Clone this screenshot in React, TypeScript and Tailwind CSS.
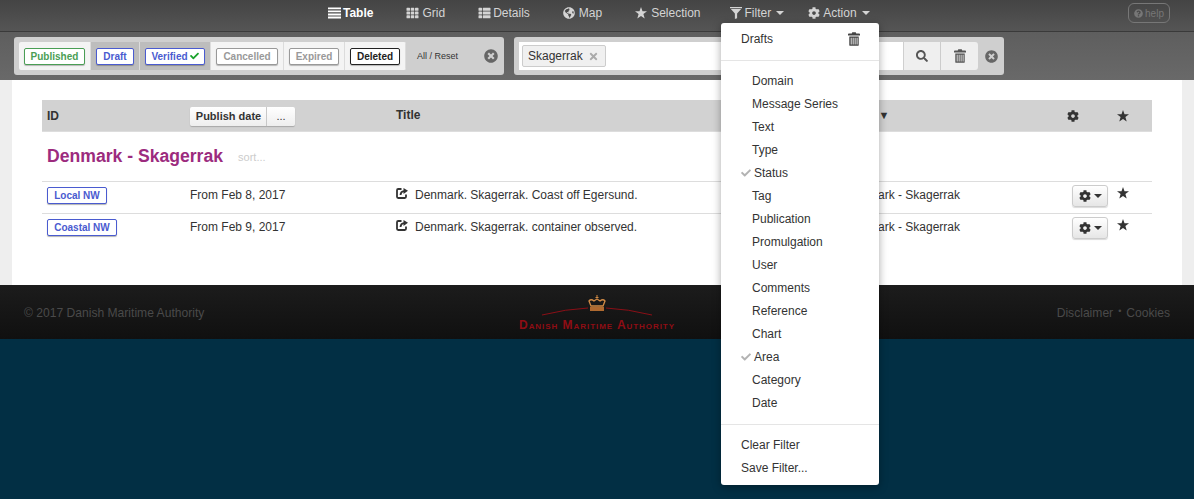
import React from "react";
import { FaCog, FaSearch, FaTh, FaThList, FaCheck, FaTimes, FaTimesCircle, FaQuestionCircle, FaGlobeAmericas } from "react-icons/fa";

const font = { fontFamily: '"Liberation Sans", Arial, sans-serif' };

function Trash({ className = "" }: { className?: string }) {
  return (
    <svg viewBox="0 0 14 16" className={className} fill="currentColor">
      <path d="M5 0h4l.6 1.5H13a1 1 0 0 1 1 1V4H0V2.500a1 1 0 0 1 1-1h3.400z" />
      <path d="M1.500 5h11v10a1 1 0 0 1-1 1h-9a1 1 0 0 1-1-1zM3.200 6.500v8h1v-8zm2.300 0v8h1v-8zm2.300 0v8h1v-8zm2.300 0v8h1v-8z" fillRule="evenodd" />
    </svg>
  );
}

function FilterIcon({ className = "" }: { className?: string }) {
  return (
    <svg viewBox="0 0 14 14" className={className} fill="currentColor">
      <path d="M0 0h14v1.400H0zM1 2.400h12L8.300 7.500V13l-2.600 1V7.500z" />
    </svg>
  );
}

function Bars({ className = "" }: { className?: string }) {
  return (
    <svg viewBox="0 0 14 12" className={className} fill="currentColor">
      <path d="M0 0h14v2H0zM0 3.300h14v2H0zM0 6.600h14v2H0zM0 9.900h14v2H0z" />
    </svg>
  );
}

function Star({ className = "" }: { className?: string }) {
  return (
    <svg viewBox="0 0 12 12" className={className} fill="currentColor">
      <path d="M6 0l1.500 4.300H12L8.400 7l1.300 4.600L6 8.900l-3.700 2.700L3.600 7 0 4.300h4.500z" />
    </svg>
  );
}

function ShareIcon({ className = "" }: { className?: string }) {
  return (
    <svg viewBox="0 0 12 12" className={className} fill="none" stroke="currentColor">
      <path d="M5.500 2H2.200Q1 2 1 3.200v6.600Q1 11 2.200 11h6.600Q10 11 10 9.800V7.500" strokeWidth="1.800" />
      <path d="M4.500 8Q4.800 4.500 8 4.200" strokeWidth="1.800" />
      <path d="M7.500 1L12 3.800 7.500 7z" fill="currentColor" stroke="none" />
    </svg>
  );
}

function Caret() {
  return <span className="ml-[2px] inline-block h-0 w-0 border-x-[4px] border-t-[4px] border-x-transparent border-t-current" />;
}

function NavItem({ icon, label, active, caret, className = "" }: { icon: React.ReactNode; label: string; active?: boolean; caret?: boolean; className?: string }) {
  return (
    <div className={`flex items-center ${active ? "font-bold text-white" : "text-[#d4d4d4]"} ${className}`}>
      {icon}
      <span>{label}</span>
      {caret && <span className="ml-[3px] flex"><Caret /></span>}
    </div>
  );
}

function Status({ label, cls, width, active, check }: { label: string; cls: string; width: string; active?: boolean; check?: boolean }) {
  return (
    <div className={`flex h-[28px] items-center justify-center border-r border-[#dcdcdc] px-[5px] ${active ? "bg-[#bdbdbd]" : ""} ${width}`}>
      <span className={`flex h-[17px] w-full items-center justify-center gap-[2px] rounded-[2px] border bg-white text-[10px] font-bold shadow-[0_1px_1px_rgba(0,0,0,0.25)] ${cls}`}>
        {label}
        {check && <FaCheck className="h-[10px] w-[9px] text-[#1aa32c]" />}
      </span>
    </div>
  );
}

const gridCols = "grid-cols-[148px_206px_450px_218px_1fr]";

function Row({ badge, badgeW, date, title, area }: { badge: string; badgeW: string; date: string; title: string; area: string }) {
  return (
    <div className={`grid h-[32px] ${gridCols} border-t border-[#dddddd] text-[12px] text-[#333]`}>
      <div className="pl-[5px] pt-[5px]">
        <span className={`flex h-[17px] items-center justify-center rounded-[2px] border border-[#4a5bd0] bg-white text-[10px] font-bold text-[#4a5bd0] shadow-[0_1px_1px_rgba(0,0,0,0.3)] ${badgeW}`}>{badge}</span>
      </div>
      <div className="pt-[4px]">{date}</div>
      <div className="flex items-start gap-[7px] pt-[4px]">
        <ShareIcon className="mt-[1px] h-[12px] w-[12px] text-[#333]" />
        <span>{title}</span>
      </div>
      <div className="pt-[4px]">{area}</div>
      <div className="flex items-start pt-[3px]">
        <button className="ml-[8px] flex h-[22px] w-[36px] items-center justify-center gap-[1px] rounded-[3px] border border-[#ccc] bg-gradient-to-b from-white to-[#e6e6e6] text-[#333] shadow-[0_1px_1px_rgba(0,0,0,0.15)]">
          <FaCog className="h-[12px] w-[12px]" />
          <Caret />
        </button>
        <Star className="ml-[9px] mt-[2px] h-[12px] w-[12px] text-[#333]" />
      </div>
    </div>
  );
}

function MenuItem({ label, checked }: { label: string; checked?: boolean }) {
  return (
    <div className="flex h-[23px] items-center pl-[20px] text-[12px] text-[#333]">
      {checked ? (
        <>
          <FaCheck className="h-[10px] w-[10px] text-[#b3b3b3]" />
          <span className="ml-[3px]">{label}</span>
        </>
      ) : (
        <span className="ml-[11px]">{label}</span>
      )}
    </div>
  );
}

const menu: [string, boolean?][] = [
  ["Domain"], ["Message Series"], ["Text"], ["Type"], ["Status", true], ["Tag"], ["Publication"], ["Promulgation"],
  ["User"], ["Comments"], ["Reference"], ["Chart"], ["Area", true], ["Category"], ["Date"],
];

export default function App() {
  return (
    <div className="relative flex h-[499px] flex-col overflow-hidden bg-[#022f44]" style={font}>
      <nav className="relative h-[32px] shrink-0 border-b border-[#3a3a3a] bg-gradient-to-b from-[#444444] to-[#555555] text-[12px]">
        <div className="flex h-[26px] items-center pl-[328px]">
          <NavItem active label="Table" icon={<Bars className="mr-[2px] h-[12px] w-[13px]" />} />
          <NavItem className="ml-[33px]" label="Grid" icon={<FaTh className="mr-[3px] h-[12px] w-[13px]" />} />
          <NavItem className="ml-[33px]" label="Details" icon={<FaThList className="mr-[2px] h-[12px] w-[13px]" />} />
          <NavItem className="ml-[33px]" label="Map" icon={<FaGlobeAmericas className="mr-[4px] h-[12px] w-[12px]" />} />
          <NavItem className="ml-[33px]" label="Selection" icon={<Star className="mr-[4px] h-[12px] w-[12px]" />} />
          <NavItem className="ml-[29px]" label="Filter" caret icon={<FilterIcon className="mr-[3px] h-[12px] w-[12px]" />} />
          <NavItem className="ml-[24px]" label="Action" caret icon={<FaCog className="mr-[3px] h-[12px] w-[12px]" />} />
          <div className="ml-auto mr-[24px] flex h-[20px] w-[42px] items-center justify-center gap-[2px] rounded-[6px] border border-[#777] text-[10px] text-[#777]">
            <FaQuestionCircle className="h-[9px] w-[9px]" />
            help
          </div>
        </div>
      </nav>

      <div className="flex h-[48px] shrink-0 items-center gap-[10px] bg-gradient-to-b from-[#5e5e5e] to-[#696969] pl-[14px]">
        <div className="flex h-[38px] w-[490px] items-center rounded-[3px] bg-[#cfcfcf] pl-[5px]">
          <div className="flex overflow-hidden rounded-[2px] bg-[#f4f4f4]">
            <Status label="Published" width="w-[72px]" cls="border-[#4a9e55] text-[#4a9e55]" />
            <Status label="Draft" width="w-[49px]" active cls="border-[#4a5bd0] text-[#4a5bd0]" />
            <Status label="Verified" width="w-[71px]" active check cls="border-[#4a5bd0] text-[#4a5bd0]" />
            <Status label="Cancelled" width="w-[73px]" cls="border-[#999] text-[#999]" />
            <Status label="Expired" width="w-[61px]" cls="border-[#999] text-[#999]" />
            <Status label="Deleted" width="w-[61px]" cls="border-[#222] text-[#222]" />
          </div>
          <span className="ml-[11px] mt-[2px] text-[9px] text-[#333]">All / Reset</span>
          <FaTimesCircle className="ml-[26px] h-[14px] w-[14px] text-[#666]" />
        </div>
        <div className="flex h-[38px] w-[490px] items-center rounded-[3px] bg-[#cfcfcf] pl-[5px]">
          <div className="flex h-[28px] w-[384px] items-center bg-white pl-[3px]">
            <span className="flex h-[22px] w-[84px] items-center gap-[5px] rounded-[2px] border border-[#ccc] bg-[#f0f0f0] pl-[5px] text-[12px] text-[#333]">
              Skagerrak
              <FaTimes className="h-[11px] w-[11px] text-[#aaa]" />
            </span>
          </div>
          <div className="ml-[1px] flex h-[28px] w-[37px] items-center justify-center border-r border-[#ccc] bg-[#efefef] text-[#555]">
            <FaSearch className="h-[12px] w-[12px]" />
          </div>
          <div className="flex h-[28px] w-[37px] items-center justify-center rounded-r-[3px] bg-[#efefef] text-[#555]">
            <Trash className="h-[14px] w-[12px]" />
          </div>
          <FaTimesCircle className="ml-[7px] h-[13px] w-[13px] text-[#666]" />
        </div>
      </div>

      <main className="h-[205px] shrink-0 bg-[#eeeeee] px-[12px]">
        <div className="h-full bg-white px-[30px] pt-[20px]">
          <div className={`grid h-[32px] ${gridCols} items-center border-b border-[#dddddd] bg-[#d2d2d2] text-[12px] font-bold text-[#333]`}>
            <div className="pl-[5px]">ID</div>
            <div className="mt-[2px] flex">
              <span className="flex h-[19px] w-[77px] items-center justify-center rounded-l-[2px] border-r border-[#ccc] bg-gradient-to-b from-white to-[#eeeeee] pl-[1px] text-[11px] shadow-[0_1px_1px_rgba(0,0,0,0.2)]">Publish date</span>
              <span className="flex h-[19px] w-[28px] items-center justify-center rounded-r-[2px] bg-gradient-to-b from-white to-[#eeeeee] text-[11px] font-normal shadow-[0_1px_1px_rgba(0,0,0,0.2)]">...</span>
            </div>
            <div className="pb-[1px]">Title</div>
            <div className="flex text-[11px]"><span>Area</span><span className="ml-[8px]">▼</span></div>
            <div className="flex items-center">
              <FaCog className="ml-[3px] h-[12px] w-[12px]" />
              <Star className="ml-[38px] h-[12px] w-[12px]" />
            </div>
          </div>
          <div className="flex h-[49px] items-center pl-[5px]">
            <h2 className="text-[17.6px] font-bold text-[#9c2b7e]">Denmark - Skagerrak</h2>
            <span className="ml-[15px] mt-[2px] text-[11px] text-[#cccccc]">sort...</span>
          </div>
          <Row badge="Local NW" badgeW="w-[60px]" date="From Feb 8, 2017" title="Denmark. Skagerrak. Coast off Egersund." area="Denmark - Skagerrak" />
          <Row badge="Coastal NW" badgeW="w-[70px]" date="From Feb 9, 2017" title="Denmark. Skagerrak. container observed." area="Denmark - Skagerrak" />
        </div>
      </main>

      <footer className="grid h-[54px] shrink-0 grid-cols-[1fr_auto_1fr] items-center bg-gradient-to-b from-[#1c1c1c] to-[#101010] px-[24px] text-[12.1px] text-[#4a4a4a]">
        <span className="pt-[2px]">© 2017 Danish Maritime Authority</span>
        <div className="flex flex-col items-center">
          <svg viewBox="0 0 112 22" className="h-[22px] w-[112px]">
            <path d="M1 21Q25 15 47 14M65 14Q87 15 111 21" stroke="#8a0f16" strokeWidth="1" fill="none" />
            <rect x="49" y="13" width="14" height="4" fill="#b06a30" />
            <path d="M50 12L48 7Q50 4.500 53 7L56 5L59 7Q62 4.500 64 7L62 12z" fill="none" stroke="#d08a45" strokeWidth="1.300" />
            <path d="M55.500 1h1v2h1v1h-3V3h1z" fill="#d08a45" />
          </svg>
          <span className="mt-[3px] text-[12px] font-bold leading-[12px] tracking-[0.95px] text-[#8f0d14]" style={{ fontVariant: "small-caps" }}>Danish Maritime Authority</span>
        </div>
        <span className="flex justify-end gap-[5px] pt-[2px]">Disclaimer <span className="text-[9px] leading-[14px]">•</span> Cookies</span>
      </footer>
      <div className="flex-1" />

      <div className="absolute left-[721px] top-[23px] h-[462px] w-[158px] rounded-[3px] bg-white shadow-[0_2px_8px_rgba(0,0,0,0.35)]">
        <div className="flex h-[37px] items-center justify-between pb-[6px] pl-[20px] pr-[19px] text-[12px] text-[#333]">
          <span>Drafts</span>
          <Trash className="h-[14px] w-[12px] text-[#444]" />
        </div>
        <div className="h-px bg-[#e5e5e5]" />
        <div className="pt-[8px]">
          {menu.map(([label, checked]) => (
            <MenuItem key={label} label={label} checked={checked} />
          ))}
        </div>
        <div className="mt-[10px] h-px bg-[#e5e5e5]" />
        <div className="pt-[8px] text-[12px] text-[#333]">
          <div className="flex h-[23px] items-center pl-[20px]">Clear Filter</div>
          <div className="flex h-[23px] items-center pl-[20px]">Save Filter...</div>
        </div>
      </div>
    </div>
  );
}
